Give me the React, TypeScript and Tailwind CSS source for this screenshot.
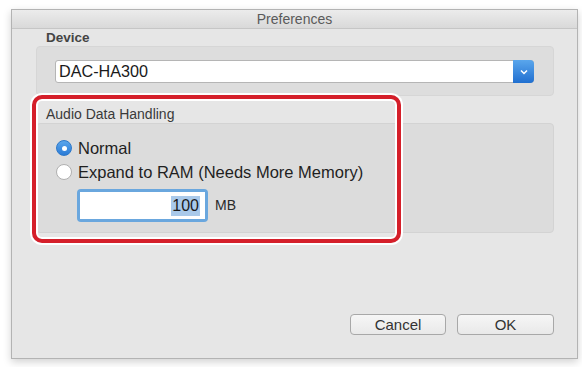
export default function App() {
  return (
    <div className="w-[582px] h-[367px] bg-white pt-[9px] pl-[11px] font-['Liberation_Sans',Arial,sans-serif]">
      <div className="relative w-[567px] h-[350px] border border-[#b3b3b3] bg-[#e6e6e6] shadow-[0_3px_8px_rgba(0,0,0,0.18)] flex flex-col">
        <div className="h-[19px] shrink-0 border-b border-[#c6c6c6] bg-gradient-to-b from-[#ececec] to-[#d9d9d9] flex items-center justify-center text-[14px] text-[#5a5a5a]">
          Preferences
        </div>

        <div className="flex flex-col flex-1 pl-[24px] pr-[23px] pb-[23px]">
          <div className="h-[17px] pl-[10px] pt-[1px] text-[13.5px] font-bold text-[#444] leading-[16px]">Device</div>
          <div className="h-[50px] rounded-[4px] border border-[#d6d6d6] bg-[#dddddd] pt-[13px] pl-[18px] pr-[19px]">
            <div className="flex h-[23px] rounded-[3px] border border-[#b5b5b5] bg-white">
              <div className="flex-1 pl-[3px] text-[16.2px] leading-[21px] text-[#1a1a1a]">DAC-HA300</div>
              <div className="w-[21px] -my-px -mr-px rounded-r-[4px] bg-gradient-to-b from-[#5aa6ec] to-[#1f6fd0] flex items-center justify-center">
                <svg width="8" height="6" viewBox="0 0 8 6">
                  <path d="M1 1.5 L4 4.5 L7 1.5" fill="none" stroke="white" strokeWidth="1.5" />
                </svg>
              </div>
            </div>
          </div>

          <div className="mt-[10px] h-[17px] pl-[10px] text-[14px] text-[#3a3a3a] leading-[16px]">Audio Data Handling</div>
          <div className="h-[110px] rounded-[4px] border border-[#d3d3d3] bg-[#dcdcdc] pt-[16px] pl-[19px]">
            <div className="flex items-center h-[16px] gap-[6px]">
              <div className="w-[16px] h-[16px] rounded-full bg-gradient-to-b from-[#5aa6ec] to-[#2a7bd6] border border-[#2d78c9] flex items-center justify-center">
                <div className="w-[5px] h-[5px] rounded-full bg-white" />
              </div>
              <span className="text-[16.5px] text-[#1f1f1f]">Normal</span>
            </div>
            <div className="flex items-center h-[16px] gap-[6px] mt-[8px]">
              <div className="w-[16px] h-[16px] rounded-full bg-white border border-[#b0b0b0]" />
              <span className="text-[16.5px] text-[#1f1f1f]">Expand to RAM (Needs More Memory)</span>
            </div>
            <div className="flex items-center mt-[9px] ml-[21px] gap-[7px]">
              <div className="w-[131px] h-[33px] rounded-[4px] bg-[#6aa7de] p-[3px]">
                <div className="h-full bg-white flex items-center justify-end pr-[5px]">
                  <span className="bg-[#a9c9ea] text-[16px] leading-[20px] text-[#1a1a1a] px-[1px]">100</span>
                </div>
              </div>
              <span className="text-[14px] text-[#2a2a2a]">MB</span>
            </div>
          </div>

          <div className="flex-1" />

          <div className="flex justify-end gap-[11px]">
            <button className="w-[96px] h-[21px] rounded-[4px] border border-[#a8a8a8] bg-gradient-to-b from-[#f6f6f6] to-[#e9e9e9] text-[15px] text-[#333] leading-[19px]">
              Cancel
            </button>
            <button className="w-[97px] h-[21px] rounded-[4px] border border-[#a8a8a8] bg-gradient-to-b from-[#f6f6f6] to-[#e9e9e9] text-[15px] text-[#333] leading-[19px]">
              OK
            </button>
          </div>
        </div>

        <div className="absolute left-[20px] top-[85px] w-[369px] h-[148px] rounded-[10px] border-[4px] border-[#d51f2a] shadow-[0_0_0_2px_#ffffff,inset_0_0_0_2px_#ffffff]" />
      </div>
    </div>
  )
}
